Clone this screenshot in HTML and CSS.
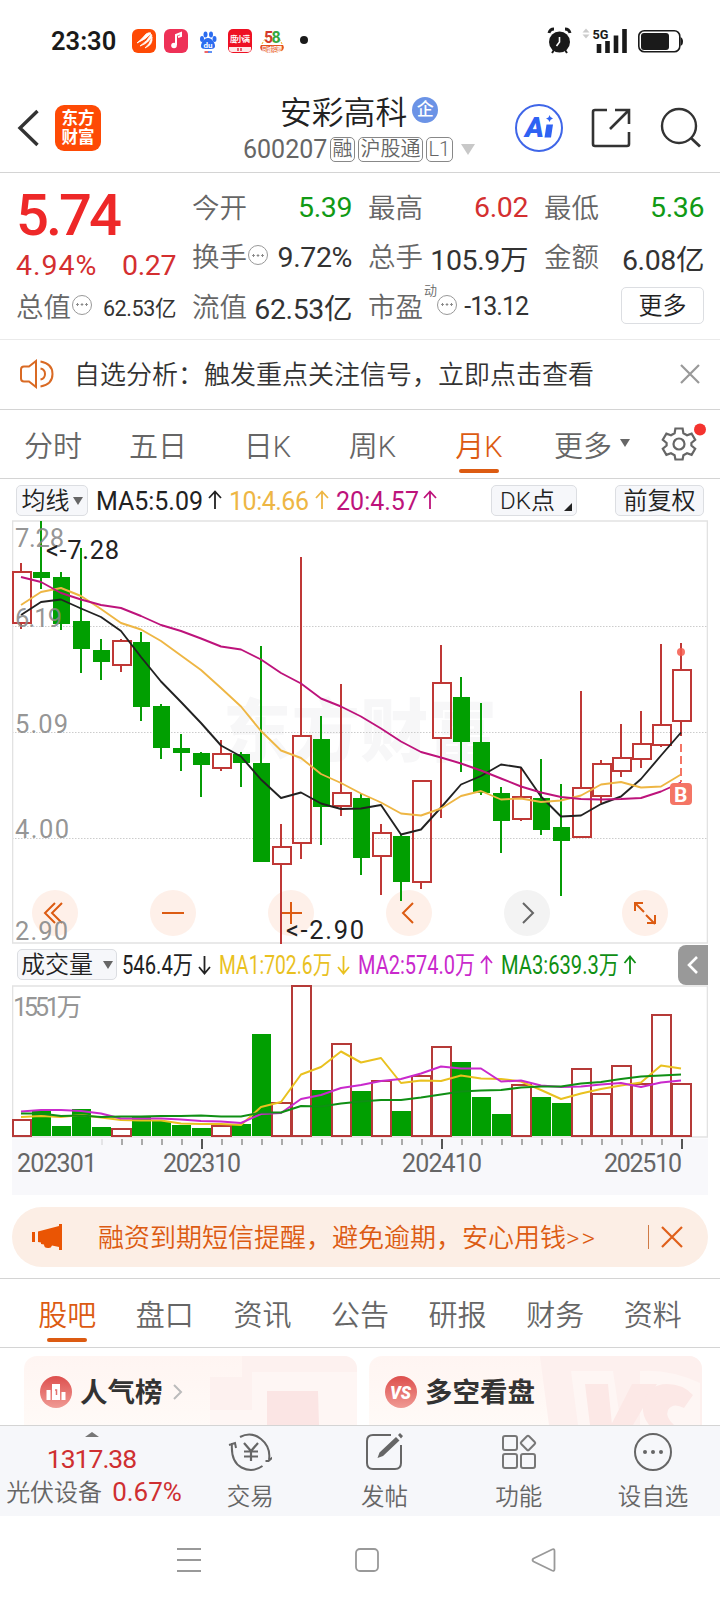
FILE: index.html
```html
<!DOCTYPE html>
<html lang="zh-CN">
<head>
    <meta charset="UTF-8">
    <title>安彩高科 600207</title>
    <link rel="stylesheet" href="styles.css">
</head>
<body>
    <!-- Status bar -->
    <div class="status">
        <span class="time">23:30</span>
        <svg class="apps" width="178" height="26" viewBox="131 29 178 26">
            <rect x="132" y="30" width="24" height="24" rx="6" fill="#fe4a05"/>
            <path d="M137 44Q147 40 151 34Q149 33 146 35Q142 40 137 44ZM140 47Q148 42 151 35L152 37Q149 44 140 47ZM145 49Q150 45 152 38Q153 46 145 49Z" fill="#fff" stroke="#fff" stroke-width=".8"/>
            <rect x="164" y="30" width="24" height="24" rx="6" fill="#ee3157"/>
            <path d="M176 46V36l5-2v3l-3 1" fill="none" stroke="#fff" stroke-width="2"/>
            <circle cx="174" cy="46.500" r="2.800" fill="#fff"/>
            <g fill="#2c6cf0">
                <ellipse cx="202" cy="40" rx="2" ry="3"/><ellipse cx="205.500" cy="35.500" rx="2" ry="3"/>
                <ellipse cx="211" cy="35.500" rx="2" ry="3"/><ellipse cx="214.500" cy="40" rx="2" ry="3"/>
                <path d="M208 39c4 0 7 5 7 8s-3 3-7 3-7 0-7-3 3-8 7-8z"/>
            </g>
            <text x="203.500" y="48.500" font-size="8" font-weight="700" fill="#fff">du</text>
            <path d="M204.500 53h4" stroke="#e33" stroke-width="1.500"/><path d="M208 53h4" stroke="#2c6cf0" stroke-width="1.500"/>
            <rect x="228" y="30" width="24" height="24" rx="5" fill="#ee1023"/>
            <path d="M229 48h22v2q0 3-3 3h-16q-3 0-3-3z" fill="#ffe9e9"/>
            <path d="M238 49v3M241 49v3" stroke="#d34" stroke-width="1.500"/>
            <text x="230" y="43" font-size="7.500" font-weight="700" fill="#fff" textLength="20">度小满</text>
            <path d="M261 46h22q2 3-1 6q-10 4-20 0q-3-3-1-6z" fill="#e4511f"/>
            <path d="M262 45q3-6 6-7M282 45q-2-5-4-6" fill="none" stroke="#f0b429" stroke-dasharray="2 1.500"/>
            <text x="264" y="44" font-size="16" font-weight="700" fill="#d33a2c">5</text>
            <text x="271.500" y="44" font-size="16" font-weight="700" fill="#36a73f">8</text>
            <text x="262" y="52.500" font-size="6.500" font-weight="700" fill="#fff" textLength="20" lengthAdjust="spacingAndGlyphs">同城招聘</text>
            <circle cx="304" cy="41" r="4" fill="#1a1a1a"/>
        </svg>
        <svg class="signals" width="140" height="30" viewBox="545 26 140 30">
            <circle cx="559.500" cy="42" r="10.500" fill="#1a1a1a"/>
            <path d="M549 33q1-4 5-4M570 33q-1-4-5-4" fill="none" stroke="#1a1a1a" stroke-width="3"/>
            <path d="M554 50l-2 3M565 50l2 3" stroke="#1a1a1a" stroke-width="2"/>
            <path d="M559.500 37v5l-3 4" fill="none" stroke="#fff" stroke-width="1.600"/>
            <path d="M586 28.500l3.500 4h-7zM586 38.500l3.500-4h-7z" fill="#ccc"/>
            <text x="592.500" y="38.500" font-size="13" font-weight="700" fill="#1a1a1a" textLength="16" lengthAdjust="spacingAndGlyphs">5G</text>
            <path d="M599 44v9M607.500 41v12M616 35.500v17.500M624.500 29v24" stroke="#1a1a1a" stroke-width="4.600"/>
            <rect x="638.800" y="30.800" width="41" height="21" rx="5.500" fill="none" stroke="#1a1a1a" stroke-width="1.600"/>
            <rect x="641" y="33" width="28" height="17" rx="3" fill="#1a1a1a"/>
            <path d="M680.500 37q2.500 1 2.500 4.500t-2.500 4.500z" fill="#1a1a1a"/>
        </svg>
    </div>

    <!-- Title bar -->
    <header class="header">
        <svg class="back" width="24" height="40" viewBox="0 0 24 40"><path d="M20.500 3L3 20l17.500 17" fill="none" stroke="#333" stroke-width="3.400"/></svg>
        <div class="logo"><span>东方</span><span>财富</span></div>
        <div class="title">
            <h1>安彩高科<i class="badge">企</i></h1>
            <p><span class="code">600207</span><b>融</b><b>沪股通</b><b>L1</b><i class="caret"></i></p>
        </div>
        <svg class="tools" width="200" height="56" viewBox="510 100 200 56">
            <circle cx="539" cy="128" r="23" fill="none" stroke="#3f66e8" stroke-width="2"/>
            <text x="525" y="137" font-size="27" font-weight="900" font-style="italic" fill="#2f62f3" textLength="19" lengthAdjust="spacingAndGlyphs">A</text>
            <path d="M546.500 124.500h6.500l-2 13h-6.500z" fill="#2f62f3"/>
            <path d="M549.500 115q.6 3 3.500 3.500q-3 .6-3.500 3.500q-.6-3-3.500-3.500q3-.5 3.500-3.500z" fill="#2f62f3"/>
            <path d="M607 110h-12q-2 0-2 2v32q0 2 2 2h32q2 0 2-2v-12M615 110h14v14M628 111l-18 18" fill="none" stroke="#333" stroke-width="2.600"/>
            <circle cx="679" cy="126" r="17" fill="none" stroke="#333" stroke-width="2.400"/>
            <path d="M691 138l9 8.500" stroke="#333" stroke-width="2.800"/>
        </svg>
    </header>

    <!-- Quote -->
    <section class="quote">
        <div class="col main">
            <div class="price">5.74</div>
            <div class="row change"><span>4.94%</span><span>0.27</span></div>
            <div class="row"><label>总值<i class="tip"></i></label><span class="small">62.53亿</span></div>
        </div>
        <div class="col">
            <div class="row"><label>今开</label><span class="down">5.39</span></div>
            <div class="row"><label>换手<i class="tip"></i></label><span>9.72%</span></div>
            <div class="row"><label>流值</label><span>62.53亿</span></div>
        </div>
        <div class="col">
            <div class="row"><label>最高</label><span class="up">6.02</span></div>
            <div class="row"><label>总手</label><span>105.9万</span></div>
            <div class="row"><label>市盈<sup>动</sup><i class="tip"></i></label><span class="mid">-13.12</span></div>
        </div>
        <div class="col">
            <div class="row"><label>最低</label><span class="down">5.36</span></div>
            <div class="row"><label>金额</label><span>6.08亿</span></div>
            <div class="row end"><button class="more">更多</button></div>
        </div>
    </section>

    <!-- Notice -->
    <div class="notice">
        <svg width="34" height="30" viewBox="0 0 34 30" fill="none" stroke="#d96a24" stroke-width="2">
            <path d="M16 2v26l-7-5.500H4q-3 0-3-3v-9q0-3 3-3h5zM20.500 9.500q4.500 1 4.500 5.500t-4.500 5.500M20.500 2.500q12 2 12 12.500t-12 12.500"/>
        </svg>
        <p>自选分析：触发重点关注信号，立即点击查看</p>
        <svg width="20" height="20" viewBox="0 0 20 20"><path d="M1 1l18 18M19 1L1 19" stroke="#999" stroke-width="2.200"/></svg>
    </div>

    <!-- Period tabs -->
    <nav class="periods">
        <a>分时</a>
        <a>五日</a>
        <a>日K</a>
        <a>周K</a>
        <a class="active">月K</a>
        <a>更多<i class="arrow"></i></a>
        <svg width="46" height="46" viewBox="660 421 46 46">
            <path d="M675.400 428.500h7.200l.8 4.800 3.600 2 4.600-1.700 3.600 6.200-3.800 3.200v2.500l3.800 3.200-3.600 6.200-4.600-1.700-3.600 2-.8 4.300h-7.200l-.8-4.300-3.600-2-4.600 1.700-3.600-6.200 3.800-3.200v-2.500l-3.800-3.200 3.600-6.200 4.600 1.700 3.600-2z" fill="none" stroke="#666" stroke-width="2.200"/>
            <circle cx="679" cy="444" r="5.500" fill="none" stroke="#666" stroke-width="2.200"/>
            <circle cx="700" cy="429.500" r="6" fill="#f4332f"/>
        </svg>
    </nav>

    <!-- K line chart -->
    <div class="toolbar">
        <button class="ma">均线<i class="arrow"></i></button>
        <svg class="readout" width="350" height="36" viewBox="95 482 350 36">
            <text x="96" y="508.500" fill="#222" textLength="107">MA5:5.09</text>
            <path d="M215 508v-17M209 497l6-6.500 6 6.500" class="ar" stroke="#222"/>
            <text x="229" y="508.500" fill="#eeb644" textLength="80">10:4.66</text>
            <path d="M322 508v-17M316 497l6-6.500 6 6.500" class="ar" stroke="#eeb644"/>
            <text x="336" y="508.500" fill="#bd137b" textLength="83">20:4.57</text>
            <path d="M430 508v-17M424 497l6-6.500 6 6.500" class="ar" stroke="#bd137b"/>
        </svg>
        <button class="dk">DK点<i class="corner"></i></button>
        <button class="fq">前复权</button>
    </div>
    <svg class="chart" width="696" height="424" viewBox="12 520 696 424">
        <text x="223" y="756" font-size="68" font-weight="900" fill="#f7f7f8" textLength="274">东方财富</text>
        <path d="M12 626.500h696M12 732.500h696M12 838.500h696" stroke="#ccc" stroke-dasharray="1.500 1.500"/>
        <path d="M12 521h695.500v422H12.500V521" fill="none" stroke="#e2e2e2" stroke-width="1.600"/>
        <!-- zoom and scroll buttons -->
        <g fill="#fef0e9">
            <circle cx="55" cy="913" r="23"/><circle cx="173" cy="913" r="23"/><circle cx="291" cy="913" r="23"/>
            <circle cx="409" cy="913" r="23"/><circle cx="527" cy="913" r="23" fill="#f3f3f3"/><circle cx="645" cy="913" r="23"/>
        </g>
        <g fill="none" stroke="#dc5b12" stroke-width="2">
            <path d="M55 903l-10 10 10 10M62 903l-10 10 10 10M162 913h22M280 913h22M291 902v22M413 903l-10 10 10 10"/>
            <path d="M643 903h-8v8M635 903l9 9M646 915l9 9M655 915v8h-8"/>
            <path d="M523 903l10 10-10 10" stroke="#666"/>
        </g>
        <!-- falling months -->
        <path stroke="#059c05" stroke-width="2" d="M41 521V589M61 572V630M81 548V673M101 639V680M141 632V721M161 704V759M181 734V771M201 752V797M241 752V787M261 646V862M321 716V845M361 794V875M401 834V901M461 677V772M481 703V795M501 787V853M541 759V835M561 784V896"/>
        <path fill="#019f01" d="M33 572h17v6h-17zM53 577h17v47h-17zM73 621h17v28h-17zM93 650h17v12h-17zM133 642h17v65h-17zM153 706h17v42h-17zM173 748h17v5h-17zM193 753h17v12h-17zM233 754h17v9h-17zM253 763h17v99h-17zM313 739h17v68h-17zM353 798h17v60h-17zM393 836h17v46h-17zM453 697h17v45h-17zM473 742h17v51h-17zM493 793h17v28h-17zM533 798h17v32h-17zM553 827h17v14h-17z"/>
        <!-- rising months -->
        <path fill="none" stroke="#bf3836" stroke-width="2" d="M21 563V571M21 624V629M121 639V641M121 665V672M221 740V753M221 768V771M281 824V847M281 864V944M301 557V736M301 843V859M341 684V793M341 807V816M381 824V832M381 857V895M421 883V889M441 645V683M441 738V818M521 768V796M521 819V821M581 691V788M601 760V764M601 797V803M621 724V758M621 772V777M641 711V744M641 760V768M661 644V724M661 745V747M681 643V669M681 721V736
            M13 572h18v51h-18zM113 641h18v24h-18zM213 754h18v14h-18zM273 847h18v17h-18zM293 736h18v107h-18zM333 793h18v13h-18zM373 833h18v23h-18zM413 781h18v101h-18zM433 683h18v55h-18zM513 797h18v22h-18zM573 788h18v49h-18zM593 764h18v32h-18zM613 758h18v13h-18zM633 744h18v15h-18zM653 725h18v20h-18zM673 670h18v51h-18z"/>
        <!-- moving averages -->
        <g fill="none" stroke-width="1.900" stroke-linejoin="round">
            <polyline stroke="#222" points="21,615 41,602 61,599.5 81,608.5 101,617 121,631 141,657 161,681.5 181,702 201,723 221,745.5 241,756.5 261,779.5 281,798 301,792.5 321,803.5 341,809 361,808.500 381,805 401,834.5 421,829.5 441,807.5 461,784.5 481,776 501,764.5 521,767.5 541,796.5 561,816.5 581,815.5 601,804 621,796.5 641,779 661,755.5 681,732.5"/>
            <polyline stroke="#eeb644" points="21,605 41,592 61,588 81,596 101,609 121,623 141,629.5 161,641 181,655.5 201,670 221,688 241,706.5 261,731 281,750.5 301,758 321,774 341,783 361,793.5 381,802.5 401,813.5 421,815.5 441,808.5 461,796 481,791 501,799.5 521,798.5 541,802 561,800.5 581,795.5 601,784.5 621,782 641,787.5 661,786.5 681,774.5"/>
            <polyline stroke="#bd137b" points="21,577 41,582 61,593 81,599.5 101,605 121,608 141,616 161,625 181,631 201,638.5 221,646.5 241,649.5 261,659.5 281,673 301,683.5 321,698.5 341,706.5 361,716.5 381,728.5 401,741.5 421,752 441,757.5 461,763.5 481,770.5 501,778.5 521,786.5 541,792.5 561,797 581,799 601,799.5 621,799 641,798 661,791.5 681,782.5"/>
        </g>
        <!-- buy mark -->
        <circle cx="681" cy="652" r="4" fill="#f4594b" opacity=".85"/>
        <path d="M681 744v38" stroke="#f47565" stroke-width="2" stroke-dasharray="8 4"/>
        <rect x="670" y="783" width="22" height="22" rx="4" fill="#f47565"/>
        <text x="674" y="801.500" font-size="21" font-weight="700" fill="#fff">B</text>
        <g class="scale">
            <text x="15" y="547" textLength="49">7.28</text>
            <text x="15" y="627" textLength="47">6.19</text>
            <text x="15" y="733" textLength="53">5.09</text>
            <text x="15" y="838" textLength="54">4.00</text>
            <text x="15" y="940" textLength="53">2.90</text>
        </g>
        <g class="peak">
            <text x="46" y="559" textLength="73">&lt;-7.28</text>
            <text x="286" y="939" textLength="78">&lt;-2.90</text>
        </g>
    </svg>

    <!-- Volume chart -->
    <div class="toolbar volume">
        <button class="vol">成交量<i class="arrow"></i></button>
        <svg class="readout" width="520" height="36" viewBox="120 947 520 36">
            <text x="122" y="974" fill="#222" textLength="71" lengthAdjust="spacingAndGlyphs">546.4万</text>
            <path d="M204.500 956v17M199 967l5.500 6.500 5.500-6.500" class="ar" stroke="#222"/>
            <text x="219" y="974" fill="#e9c11f" textLength="113" lengthAdjust="spacingAndGlyphs">MA1:702.6万</text>
            <path d="M343.500 956v17M338 967l5.500 6.500 5.500-6.500" class="ar" stroke="#e9c11f"/>
            <text x="358" y="974" fill="#c929cc" textLength="117" lengthAdjust="spacingAndGlyphs">MA2:574.0万</text>
            <path d="M486.500 974v-17M481 963l5.500-6.500 5.500 6.500" class="ar" stroke="#c929cc"/>
            <text x="501" y="974" fill="#0f8f14" textLength="118" lengthAdjust="spacingAndGlyphs">MA3:639.3万</text>
            <path d="M630 974v-17M624.500 963l5.500-6.500 5.500 6.500" class="ar" stroke="#0f8f14"/>
        </svg>
        <div class="fold"><svg width="12" height="20" viewBox="0 0 12 20"><path d="M10 2l-8 8 8 8" fill="none" stroke="#fff" stroke-width="2.600"/></svg></div>
    </div>
    <svg class="chart" width="696" height="210" viewBox="12 985 696 210">
        <rect x="12" y="1138.500" width="696" height="56.500" fill="#f8f8fb"/>
        <path d="M12 986h695.500v151H12.500V986" fill="none" stroke="#e2e2e2" stroke-width="1.600"/>
        <g class="scale"><text x="13" y="1015.500" textLength="69">1551万</text></g>
        <path fill="#019f01" d="M32 1111h19v25h-19zM52 1126h19v10h-19zM72 1109h19v27h-19zM92 1127h19v9h-19zM132 1117h19v19h-19zM152 1121h19v15h-19zM172 1125h19v11h-19zM192 1128h19v8h-19zM232 1124h19v12h-19zM252 1034h19v102h-19zM312 1090h19v46h-19zM352 1091h19v45h-19zM392 1111h19v25h-19zM452 1062h19v74h-19zM472 1097h19v39h-19zM492 1114h19v22h-19zM532 1097h19v39h-19zM552 1103h19v33h-19z"/>
        <path fill="none" stroke="#b53a38" stroke-width="2" d="M13 1136v-16h18v16zM112 1136v-7h19v7zM212 1136v-10h19v10zM272 1136v-33h19v33zM292 1136v-150h19v150zM332 1136v-92h19v92zM372 1136v-55h19v55zM412 1136v-60h19v60zM432 1136v-89h19v89zM512 1136v-51h19v51zM572 1136v-67h19v67zM592 1136v-42h19v42zM612 1136v-70h19v70zM632 1136v-52h19v52zM652 1136v-121h19v121zM672 1136v-52h19v52z"/>
        <g fill="none" stroke-width="2" stroke-linejoin="round">
            <polyline stroke="#e9c11f" points="21,1117 41,1116 61,1117 81,1115 101,1117.5 121,1120 141,1120.5 161,1120.5 181,1123.5 201,1124 221,1124 241,1125 261,1107 281,1102 301,1074.5 321,1067 341,1051.5 361,1062.5 381,1058 401,1083 421,1080.5 441,1081 461,1075.5 481,1078.5 501,1079 521,1081.5 541,1090 561,1099 581,1093.5 601,1089 621,1085.5 641,1082.5 661,1065.5 681,1068.5"/>
            <polyline stroke="#c929cc" points="21,1111.5 41,1110 61,1110 81,1111 101,1113.5 121,1118.5 141,1118.5 161,1118.5 181,1119.5 201,1121 221,1121.5 241,1123 261,1114 281,1113 301,1099 321,1095 341,1088 361,1085 381,1081 401,1079 421,1073.5 441,1066.5 461,1068.5 481,1068.5 501,1081.5 521,1080.5 541,1085.5 561,1087 581,1086.5 601,1084.5 621,1083 641,1087 661,1082.5 681,1080.5"/>
            <polyline stroke="#0f8f14" points="21,1113.5 41,1113.5 61,1116 81,1115.5 101,1117 121,1116.5 141,1116.5 161,1116 181,1116 201,1115.5 221,1116.5 241,1116.5 261,1112.5 281,1112.5 301,1106 321,1106.5 341,1103.5 361,1101.5 381,1100 401,1100 421,1097.5 441,1094.5 461,1091.5 481,1090.5 501,1090 521,1087.5 541,1086.5 561,1086.5 581,1083.5 601,1082 621,1079 641,1076.5 661,1075.5 681,1074.5"/>
        </g>
        <!-- time axis -->
        <path stroke="#aaa" stroke-width="2" d="M122 1139v6M142 1139v6M162 1139v6M182 1139v6M222 1139v6M242 1139v6M262 1139v6M282 1139v6M302 1139v6M322 1139v6M342 1139v6M362 1139v6M382 1139v6M402 1139v6M422 1139v6M462 1139v6M482 1139v6M502 1139v6M522 1139v6M542 1139v6M562 1139v6M582 1139v6M602 1139v6M622 1139v6M642 1139v6M662 1139v6"/>
        <path stroke="#e4e4e6" stroke-width="2" d="M102 1139v6"/>
        <path stroke="#555" stroke-width="2" d="M202 1139v10M442 1139v10M682 1139v10"/>
        <g class="dates">
            <text x="17" y="1171.500" textLength="80">202301</text>
            <text x="163" y="1171.500" textLength="78">202310</text>
            <text x="402" y="1171.500" textLength="80">202410</text>
            <text x="604" y="1171.500" textLength="78">202510</text>
        </g>
    </svg>

    <!-- Banner -->
    <div class="banner">
        <svg width="30" height="26" viewBox="0 0 30 26" fill="#ea5504"><path d="M0 8h3v10H0zM6 7.500L27 2V0h3v26h-3v-3l-7-1.500q-1 3-4 2.500-4 0-4-3.500l-3-.5v-1.500L6 18z"/></svg>
        <p>融资到期短信提醒，避免逾期，安心用钱<span>&gt;&gt;</span></p>
        <i class="bar"></i>
        <svg width="22" height="22" viewBox="0 0 22 22"><path d="M1 1l20 20M21 1L1 21" stroke="#e0601a" stroke-width="2.200"/></svg>
    </div>

    <!-- Content tabs -->
    <nav class="contents">
        <a class="active">股吧</a>
        <a>盘口</a>
        <a>资讯</a>
        <a>公告</a>
        <a>研报</a>
        <a>财务</a>
        <a>资料</a>
    </nav>
    <div class="cards">
        <div class="card">
            <svg class="art" width="333" height="69" viewBox="24 1356 333 69">
                <path d="M242 1356h115v69H210v-48h32z" fill="#fdf1ef"/>
                <path d="M252 1372h106v53H210v-15h42z" fill="#fef6f4"/>
                <path d="M267 1391h51l1 34h-52z" fill="#fbe5e4"/>
            </svg>
            <svg width="32" height="32" viewBox="0 0 32 32">
                <circle cx="16" cy="16" r="16" fill="url(#red)"/>
                <defs><linearGradient id="red" x2="0" y2="1"><stop stop-color="#dd4f4d"/><stop offset="1" stop-color="#f09a94"/></linearGradient></defs>
                <path d="M6.500 14h4v10h-4zM12 8h8v16h-8zM21.500 16h4v8h-4z" fill="#fff"/>
                <path d="M15 14h1.500v5" stroke="#e2736f" stroke-width="1.500" fill="none"/>
            </svg>
            <h2>人气榜</h2>
            <svg width="10" height="16" viewBox="0 0 10 16"><path d="M1 1l7 7-7 7" fill="none" stroke="#bbb" stroke-width="2"/></svg>
        </div>
        <div class="card">
            <svg class="art" width="333" height="69" viewBox="369 1356 333 69">
                <path d="M540 1356h162v69H549z" fill="#fdf0ee"/>
                <path d="M571 1371h42l8 54h-43zM640 1371q30-2 60 12v42H640z" fill="#fef6f4"/>
                <path d="M585 1384h23l4 41h-22zM632 1384h25l-24 41h-22z" fill="#fce8e6"/>
                <path d="M693 1395q-10-11-26-11-20 0-24 22-1 10 6 19h25q-9-8-6-15 5-8 16-2z" fill="#fce8e6"/>
            </svg>
            <svg width="32" height="32" viewBox="0 0 32 32">
                <circle cx="16" cy="16" r="16" fill="url(#red)"/>
                <text x="5" y="23" font-size="19" font-weight="900" font-style="italic" fill="#fff" textLength="21" lengthAdjust="spacingAndGlyphs">VS</text>
            </svg>
            <h2>多空看盘</h2>
        </div>
    </div>

    <!-- Bottom bar -->
    <footer class="bottom">
        <div class="index">
            <i class="fold-up"></i>
            <b>1317.38</b>
            <p>光伏设备<em>0.67%</em></p>
        </div>
        <a>
            <svg width="44" height="40" viewBox="228 1432 44 40" fill="none" stroke="#666" stroke-width="2">
                <path d="M240 1437q11-6 21 2t8 21M262.500 1466q-10 7-21 1.500t-9.500-24.500M229 1445l6-2 1 5M265.500 1461l3 0 4-3.500"/>
                <path d="M244 1443l7 8 7-8M251 1451v10M244 1451.500h14M244 1456.500h14" stroke-width="2.200"/>
            </svg>
            交易
        </a>
        <a>
            <svg width="44" height="40" viewBox="363 1432 44 40">
                <path d="M392 1435h-18q-6 0-6 6v22q0 6 6 6h22q6 0 6-6v-18" fill="none" stroke="#666" stroke-width="2"/>
                <path d="M397 1437l3.500 3.500L384 1456l-5.500 2 2-5.500zM399 1435l2-2 3 3-2 2.500z" fill="#666"/>
            </svg>
            发帖
        </a>
        <a>
            <svg width="44" height="40" viewBox="497 1432 44 40" fill="none" stroke="#777" stroke-width="2">
                <rect x="503" y="1436" width="14" height="14" rx="2"/><rect x="503" y="1454" width="14" height="14" rx="2"/><rect x="521" y="1454" width="14" height="14" rx="2"/>
                <rect x="522.500" y="1437.500" width="11" height="11" rx="1.500" transform="rotate(45 528 1443)"/>
            </svg>
            功能
        </a>
        <a>
            <svg width="44" height="40" viewBox="631 1432 44 40">
                <circle cx="653" cy="1452" r="18" fill="none" stroke="#666" stroke-width="2"/>
                <g fill="#666"><circle cx="645" cy="1452" r="2"/><circle cx="653" cy="1452" r="2"/><circle cx="661" cy="1452" r="2"/></g>
            </svg>
            设自选
        </a>
    </footer>
    <div class="system">
        <svg width="380" height="26" viewBox="176 1547 380 26" fill="none" stroke="#999" stroke-width="1.800">
            <path d="M177 1549h24M177 1560h24M177 1571h24"/>
            <rect x="356" y="1549" width="22" height="22" rx="4"/>
            <path d="M533.500 1558.500L552 1549.500q2.500-1 2.500 1.500v18q0 2.500-2.500 1.500l-18.500-9q-2-1.500 0-3z"/>
        </svg>
    </div>
</body>
</html>
```
FILE: styles.css
```css
* {
    box-sizing: border-box;
    margin: 0;
    padding: 0;
}
body {
    width: 720px;
    height: 1604px;
    overflow: hidden;
    background: #fff;
    color: #333;
    font-family: Roboto, "Noto Sans CJK SC", sans-serif;
    font-weight: 350;
}
i, em {
    font-style: normal;
}
svg {
    display: block;
    flex: none;
}
button {
    display: flex;
    align-items: center;
    justify-content: center;
    height: 31px;
    border: 1px solid #dcdee2;
    border-radius: 5px;
    background: #f6f7fa;
    color: #222;
    font: inherit;
    font-size: 24px;
    line-height: 28px;
}
.ar {
    fill: none;
    stroke-width: 1.800;
}
.arrow {
    border: 5px solid transparent;
    border-top: 8px solid #666;
    border-bottom: 0;
}

/* status bar */
.status {
    display: flex;
    align-items: center;
    height: 72px;
    padding: 10px 35px 0 51px;
}
.time {
    width: 80px;
    color: #1a1a1a;
    font-size: 25.500px;
    font-weight: 600;
}
.signals {
    margin-left: auto;
}

/* title bar */
.header {
    display: flex;
    align-items: center;
    height: 101px;
    padding: 11px 10px 0 17px;
    border-bottom: 1px solid #d4d4d4;
}
.logo {
    display: flex;
    flex-direction: column;
    align-items: center;
    justify-content: center;
    width: 46px;
    height: 46px;
    margin-left: 14px;
    border-radius: 9px;
    background: #fe4a05;
    color: #fff;
    font-size: 16.500px;
    font-weight: 700;
    line-height: 19px;
}
.title {
    width: 259px;
    margin: 5px 0 0 130px;
    padding-left: 12px;
}
.title h1 {
    display: flex;
    align-items: center;
    height: 38px;
    padding-left: 37px;
    color: #222;
    font-size: 31.800px;
    font-weight: 350;
}
.badge {
    width: 26px;
    height: 26px;
    margin-left: 5px;
    border-radius: 50%;
    background: #6b93e6;
    color: #fff;
    font-size: 17px;
    font-weight: 500;
    line-height: 25px;
    text-align: center;
}
.title p {
    display: flex;
    align-items: center;
    height: 40px;
    color: #666;
    font-size: 25px;
}
.title b {
    height: 25px;
    margin-left: 3px;
    padding: 0 1.500px;
    border: 1px solid #888;
    border-radius: 5px;
    font-size: 20px;
    font-weight: 350;
    line-height: 22px;
}
.title .code {
    width: 84px;
    font-weight: 400;
}
.caret {
    margin-left: 8px;
    border: 7px solid transparent;
    border-top: 11px solid #c8c8c8;
    border-bottom: 0;
}
.tools {
    margin-left: auto;
}

/* quote */
.quote {
    display: grid;
    grid-template-columns: 160px 160px 160px 160px;
    column-gap: 16px;
    height: 167px;
    padding: 10px 16px 0 16px;
    border-bottom: 1px solid #eaeaea;
    font-size: 28.500px;
}
.row {
    display: flex;
    align-items: center;
    justify-content: space-between;
    height: 49.500px;
    white-space: nowrap;
}
.row label {
    display: flex;
    align-items: center;
    margin-top: -4px;
    color: #666;
    font-size: 27.500px;
}
.row span {
    font-weight: 400;
    letter-spacing: -0.4px;
}
.row .small {
    font-size: 21.500px;
}
.row .mid {
    font-size: 25px;
    letter-spacing: -1px;
}
.row.end {
    justify-content: flex-end;
}
.row sup {
    align-self: flex-start;
    margin: -5px -1px 0 1px;
    font-size: 13px;
}
.price {
    height: 59px;
    padding-top: 4px;
    color: #ee2828;
    font-size: 58px;
    font-weight: 500;
    letter-spacing: -3px;
    line-height: 56px;
}
.main .change {
    height: 40px;
    padding-top: 6px;
    color: #d42f30;
}
.change span:first-child {
    letter-spacing: 1px;
}
.up {
    color: #d42f30;
}
.down {
    color: #119a15;
}
.tip {
    width: 20px;
    height: 20px;
    margin-left: 1px;
    border: 1.500px solid #999;
    border-radius: 50%;
    background: radial-gradient(circle 1.300px, #888 90%, transparent) center / 4.500px 17px repeat-x;
    background-clip: content-box;
    padding: 0 2px;
}
.more {
    width: 83px;
    height: 37px;
    margin-top: -2px;
    background: #fff;
}

/* notice */
.notice {
    display: flex;
    align-items: center;
    height: 70px;
    padding: 0 20px 2px;
    border-bottom: 1px solid #d4d4d4;
}
.notice p {
    flex: 1;
    margin-top: -2px;
    padding-left: 20px;
    font-size: 26px;
}

/* period tabs */
.periods {
    display: grid;
    grid-template-columns: 106px 104px 115px 95px 118px 108px 74px;
    align-items: center;
    height: 69px;
    border-bottom: 1px solid #d4d4d4;
}
.periods svg {
    margin-left: 14px;
}
nav a {
    display: flex;
    position: relative;
    align-items: center;
    justify-content: center;
    height: 68px;
    padding-bottom: 1px;
    color: #666;
    font-size: 29px;
}
nav a .arrow {
    margin: 0 0 2px 8px;
}
nav .active {
    color: #dc5b12;
}
nav .active::after {
    content: "";
    position: absolute;
    bottom: 5px;
    width: 40px;
    height: 4px;
    border-radius: 2px;
    background: #dc5b12;
}

/* chart toolbars */
.toolbar {
    display: flex;
    align-items: center;
    height: 41px;
    padding: 2px 16px 0;
}
.readout {
    font-size: 25px;
    font-weight: 400;
}
.toolbar .ma {
    width: 72px;
    margin-right: 7px;
}
.ma .arrow {
    margin-left: 3px;
}
.dk {
    width: 86px;
    margin-left: 46px;
}
.corner {
    align-self: flex-end;
    margin: 0 -4px 4px 9px;
    border-bottom: 8px solid #222;
    border-left: 8px solid transparent;
}
.fq {
    width: 89px;
    margin-left: auto;
}
.volume {
    padding: 0 12px 0 17px;
}
.vol {
    width: 100px;
    margin-right: 3px;
}
.vol .arrow {
    margin-left: 10px;
}
.fold {
    display: flex;
    align-items: center;
    justify-content: center;
    width: 30px;
    height: 40px;
    margin-left: auto;
    border-radius: 8px 0 0 8px;
    background: #999;
}
.chart {
    margin-left: 12px;
    font-weight: 400;
}
.scale {
    fill: #888;
    fill-opacity: .9;
    font-size: 25.500px;
}
.peak {
    fill: #222;
    font-size: 25.500px;
}
.dates {
    fill: #666;
    font-size: 25px;
}

/* banner */
.banner {
    display: flex;
    align-items: center;
    height: 60px;
    margin: 12px 12px 11px;
    padding: 0 25px 0 20px;
    border-radius: 30px;
    background: #fceee5;
    color: #dc5b12;
}
.banner p {
    flex: 1;
    margin-top: -4px;
    padding-left: 36px;
    font-size: 26px;
}
.banner span {
    letter-spacing: 2px;
}
.bar {
    width: 1.500px;
    height: 24px;
    margin-right: 12px;
    background: #cf7a45;
}

/* content tabs and cards */
.contents {
    display: grid;
    grid-template-columns: repeat(7, 1fr);
    height: 70px;
    padding: 0 18.500px;
    border-top: 1px solid #d4d4d4;
    border-bottom: 1px solid #d4d4d4;
}
.cards {
    display: grid;
    grid-template-columns: 333px 333px;
    column-gap: 12px;
    height: 77px;
    padding: 8px 24px 0;
}
.card {
    display: flex;
    position: relative;
    align-items: center;
    height: 69px;
    padding: 3px 16px 0;
    overflow: hidden;
    border-radius: 13px 13px 0 0;
    background: linear-gradient(#fff5f2, #fffaf7);
}
.card > * {
    position: relative;
}
.card .art {
    position: absolute;
    top: 0;
    left: 0;
}
.card h2 {
    margin: -4px 10px 0 8px;
    font-size: 27.500px;
    font-weight: 700;
}

/* bottom bar */
.bottom {
    display: grid;
    grid-template-columns: 183px repeat(4, 134.300px);
    height: 91px;
    border-top: 1px solid #d4d4d4;
    background: #f6f7fa;
    color: #666;
}
.bottom a {
    display: flex;
    flex-direction: column;
    align-items: center;
    padding-top: 6px;
    font-size: 23.500px;
    line-height: 50px;
}
.index {
    display: flex;
    flex-direction: column;
    align-items: center;
    padding-top: 6px;
}
.fold-up {
    border: 7px solid transparent;
    border-top: 0;
    border-bottom: 5px solid #777;
}
.index b, .index em {
    color: #cf2f31;
    font-weight: 400;
}
.index b {
    height: 34px;
    margin-top: 4px;
    font-size: 26.500px;
    letter-spacing: -1px;
    line-height: 35px;
}
.index p {
    padding-left: 5px;
    font-size: 24px;
    line-height: 34px;
    white-space: nowrap;
}
.index em {
    margin-left: 10px;
    font-size: 26px;
}
.system {
    padding: 31px 0 0 176px;
}
```
